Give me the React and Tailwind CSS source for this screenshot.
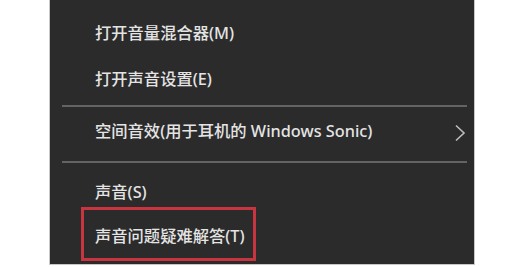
export default function App() {
  const font = { fontFamily: '"Noto Sans", "Noto Sans CJK SC", sans-serif' };
  return (
    <div className="w-[507px] h-[267px] bg-white overflow-hidden" style={font}>
      <div className="ml-[49px] w-[426px] h-[265px] border border-t-0 border-[#c8c8c8] bg-[#2b2b2b] flex flex-col text-[16.3px] font-medium text-[#e4e4e4]">
        <div className="pt-[10px]" />
        <div className="h-[46px] flex items-center pl-[45px]">打开音量混合器(M)</div>
        <div className="h-[46px] flex items-center pl-[45px]">打开声音设置(E)</div>
        <div className="mt-[3px] h-[2px] ml-[12px] mr-[7px] bg-[#636363]" />
        <div className="h-[48px] flex items-center pl-[45px] pr-[8px]">
          <span className="flex-1">空间音效(用于耳机的 Windows Sonic)</span>
          <svg width="12" height="18" viewBox="0 0 12 18" className="mt-[4px]">
            <polyline points="2,1.5 10,9 2,16.5" fill="none" stroke="#bdbdbd" strokeWidth="1.6" />
          </svg>
        </div>
        <div className="mt-[6px] h-[2px] ml-[12px] mr-[7px] bg-[#636363]" />
        <div className="h-[7px]" />
        <div className="h-[44px] flex items-center pl-[45px]">声音(S)</div>
        <div className="relative h-[44px] flex items-center pl-[45px]">
          <span>声音问题疑难解答(T)</span>
          <div className="absolute left-[31px] top-[-7px] w-[175px] h-[54px] border-[3px] border-[#c8343f]" />
        </div>
      </div>
    </div>
  );
}
